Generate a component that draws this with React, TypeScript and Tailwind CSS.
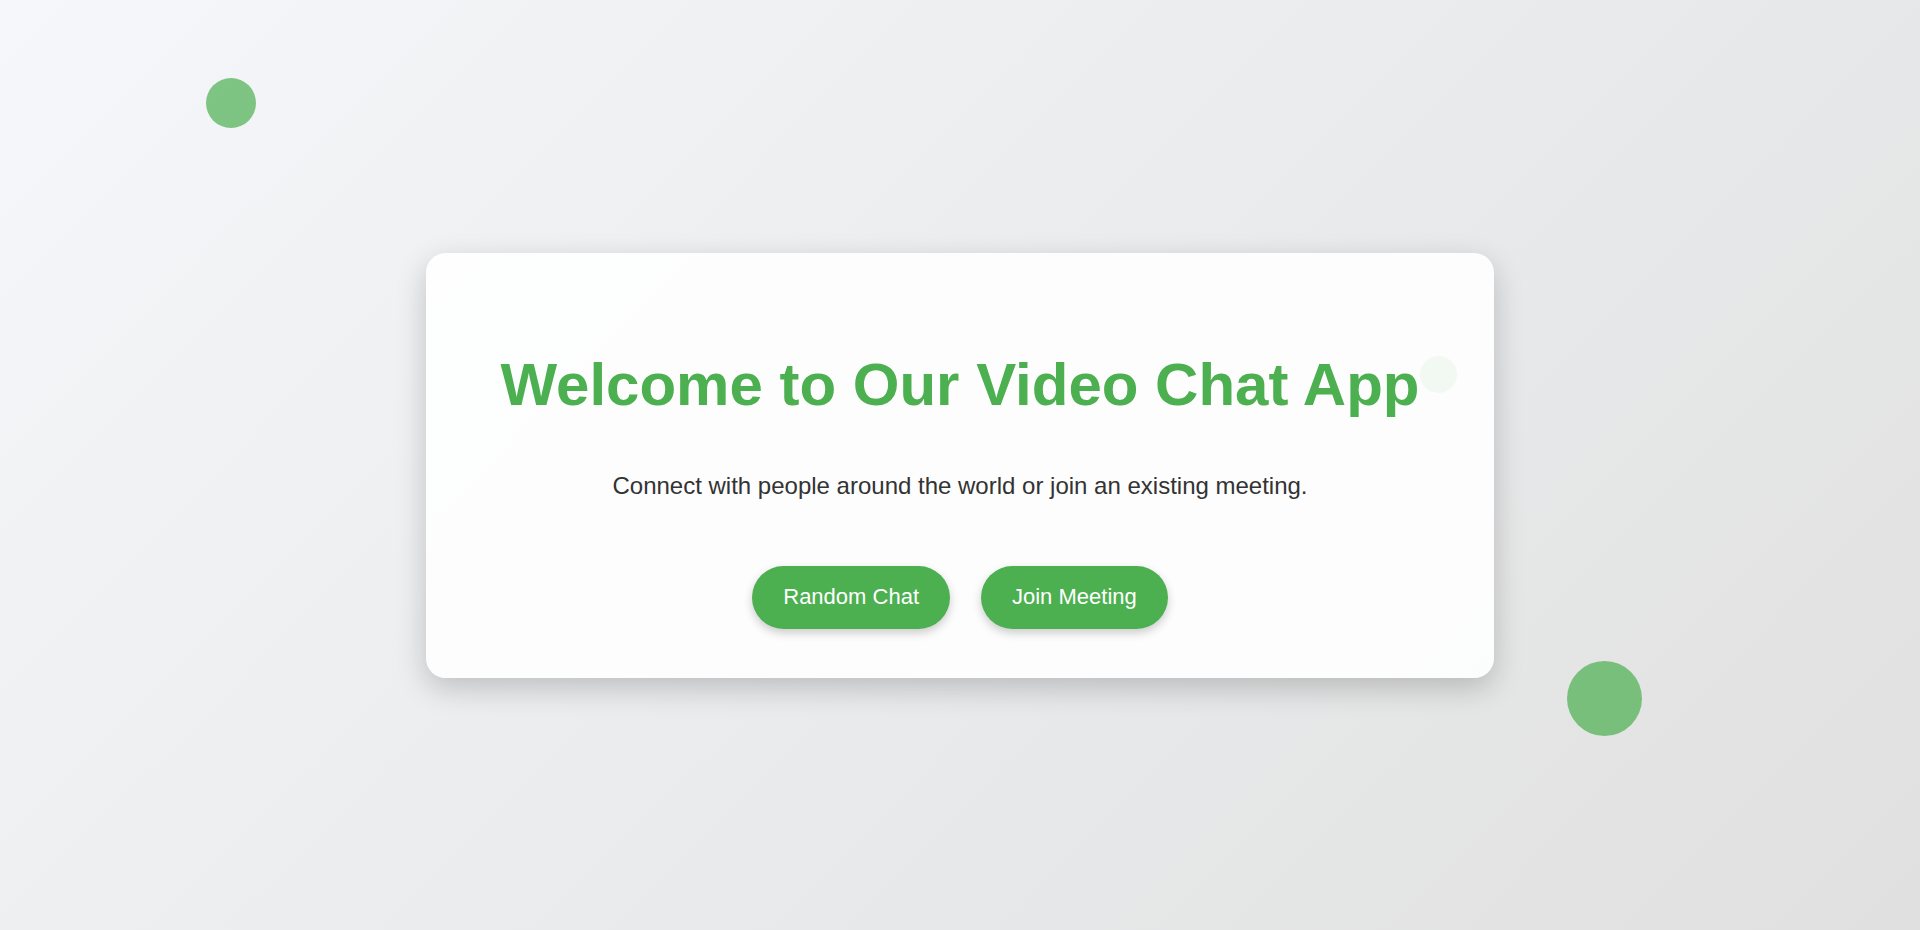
import React from "react";

export default function App() {
  return (
    <div
      className="relative flex h-[930px] w-full items-center justify-center overflow-hidden bg-[linear-gradient(135deg,#f5f7fa_0%,#e0e0e0_100%)]"
      style={{ fontFamily: '"Liberation Sans", Arial, sans-serif' }}
    >
      <div className="absolute left-[206px] top-[78px] h-[50px] w-[50px] rounded-full bg-[#4CAF50]/70" />
      <div className="absolute left-[1567px] top-[661px] h-[75px] w-[75px] rounded-full bg-[#4CAF50]/70" />
      <div className="absolute left-[1420px] top-[356px] h-[37px] w-[37px] rounded-full bg-[#4CAF50]/70" />

      <div className="relative flex w-[1068px] flex-col items-center rounded-[20px] bg-white/90 pt-[97px] pb-[49px] shadow-[0_10px_30px_rgba(0,0,0,0.2)]">
        <h1 className="text-[60px] font-bold leading-[69px] text-[#4CAF50]">
          Welcome to Our Video Chat App
        </h1>
        <p className="mt-[53px] text-[24px] leading-[28px] text-[#333333]">
          Connect with people around the world or join an existing meeting.
        </p>
        <div className="mt-[66px] flex gap-[31px]">
          <button className="flex h-[63px] items-center rounded-full bg-[#4CAF50] px-[31px] text-[22px] leading-[26px] text-white shadow-[0_4px_10px_rgba(0,0,0,0.2)]">
            Random Chat
          </button>
          <button className="flex h-[63px] items-center rounded-full bg-[#4CAF50] px-[31px] text-[22px] leading-[26px] text-white shadow-[0_4px_10px_rgba(0,0,0,0.2)]">
            Join Meeting
          </button>
        </div>
      </div>
    </div>
  );
}
